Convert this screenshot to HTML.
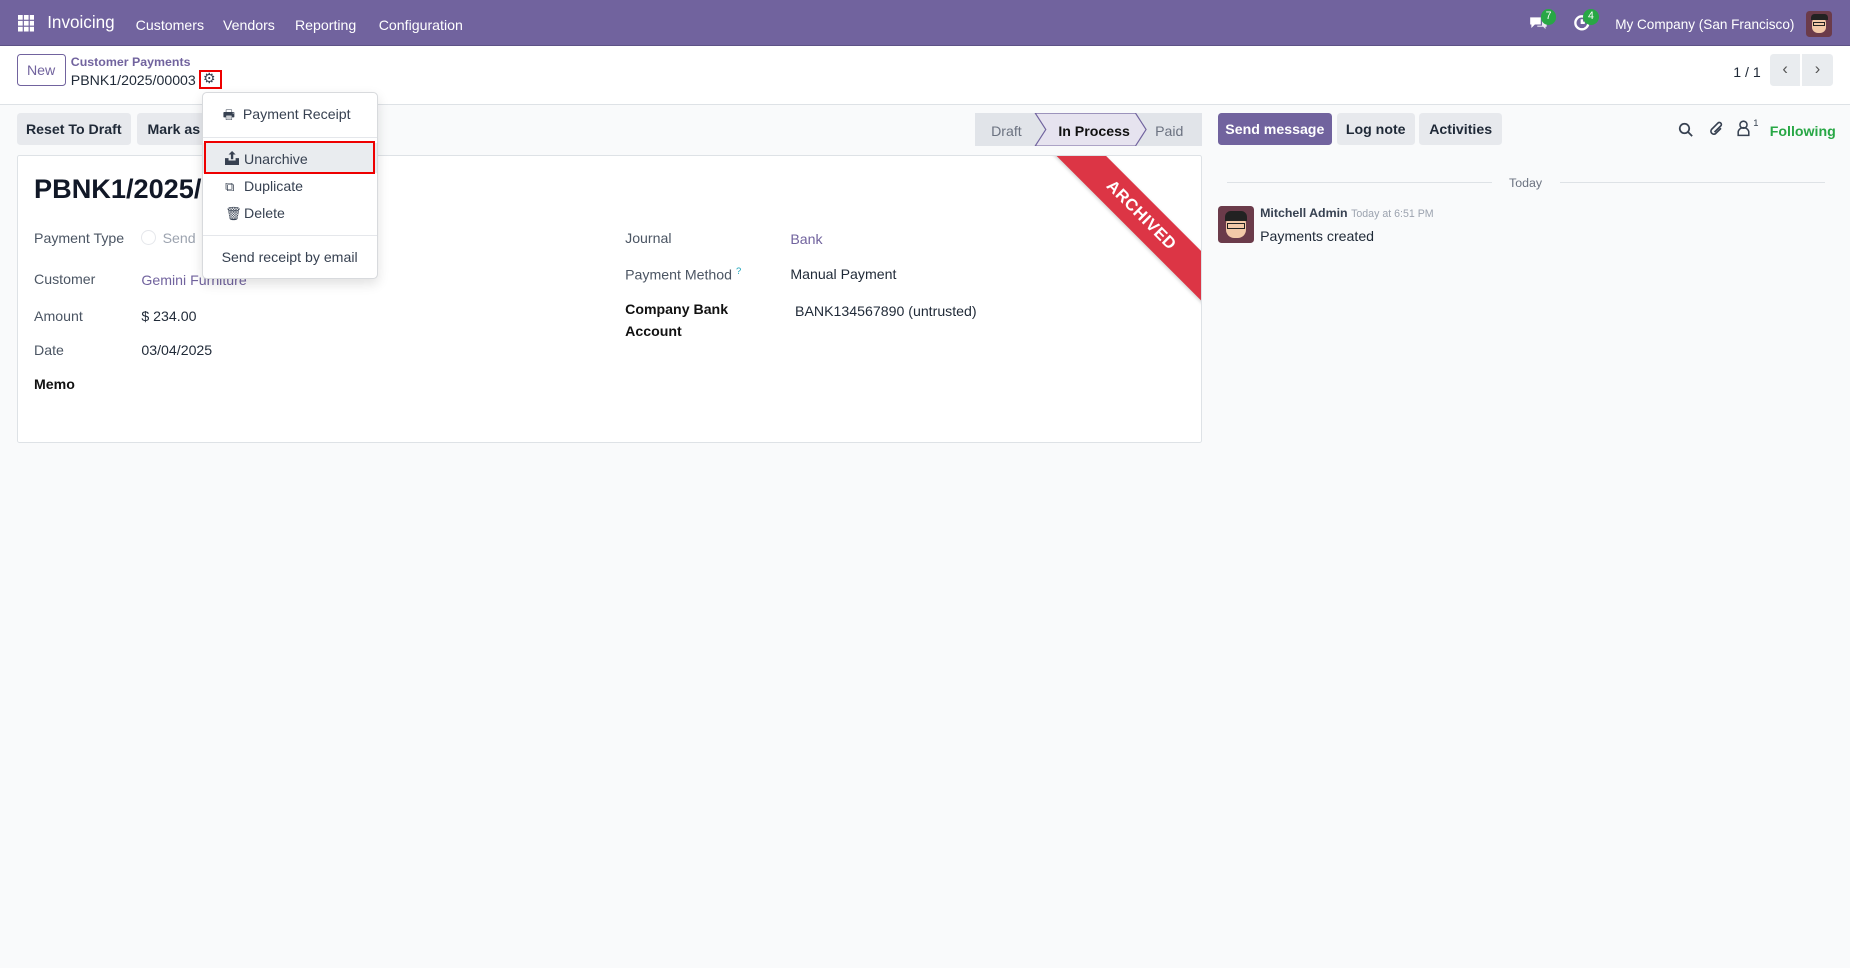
<!DOCTYPE html>
<html><head><meta charset="utf-8"><style>
html,body{margin:0;padding:0;}
body{width:1568px;height:820px;zoom:1.17985;background:#f9fafb;font-family:"Liberation Sans","DejaVu Sans",sans-serif;font-size:12px;color:#374151;position:relative;overflow:hidden;}
.a{position:absolute;white-space:nowrap;}
.nav{position:absolute;left:0;top:0;width:1568px;height:38px;background:#71639e;border-bottom:1px solid #5d5286;color:#fff;}
.cp{position:absolute;left:0;top:39px;width:1568px;height:49px;background:#fff;border-bottom:1px solid #dee2e6;}
.btn{position:absolute;height:27px;line-height:28px;border-radius:3px;background:#e7e9ed;color:#1f2937;font-weight:bold;font-size:12px;text-align:center;overflow:hidden;white-space:nowrap;}
.lbl{color:#4b5563;}
.sheet{position:absolute;left:14px;top:131px;width:1003px;height:243px;background:#fff;border:1px solid #dee2e6;border-radius:2px;overflow:hidden;}
.dd{position:absolute;left:171px;top:78px;width:148px;height:157px;background:#fff;border:1px solid #d8dadd;border-radius:4px;box-shadow:0 4px 10px rgba(0,0,0,.12);}
.dd .it{position:absolute;left:0;width:148px;height:23px;line-height:23px;color:#374151;font-size:12px;}
</style></head><body>

<div class="nav">
  <svg class="a" style="left:15px;top:13px" width="14" height="14" viewBox="0 0 14 14" fill="#fff"><rect x="0" y="0" width="4" height="4"/><rect x="5" y="0" width="4" height="4"/><rect x="10" y="0" width="4" height="4"/><rect x="0" y="5" width="4" height="4"/><rect x="5" y="5" width="4" height="4"/><rect x="10" y="5" width="4" height="4"/><rect x="0" y="10" width="4" height="4"/><rect x="5" y="10" width="4" height="4"/><rect x="10" y="10" width="4" height="4"/></svg>
  <div class="a" style="left:40px;top:11px;font-size:14.5px;">Invoicing</div>
  <div class="a" style="left:115px;top:14px;">Customers</div>
  <div class="a" style="left:189px;top:14px;">Vendors</div>
  <div class="a" style="left:250px;top:14px;">Reporting</div>
  <div class="a" style="left:321px;top:14px;">Configuration</div>
  <svg class="a" style="left:1296px;top:13px" width="16" height="14" viewBox="0 0 16 14" fill="#fff"><path d="M1 2h9v6H5l-3 3V8H1z"/><path d="M11 4h4v6h-1v2l-2-2H7V9h4z" opacity=".85"/></svg>
  <div class="a" style="left:1306px;top:8px;width:13px;height:13px;border-radius:7px;background:#28a745;font-size:9px;line-height:13px;text-align:center;">7</div>
  <svg class="a" style="left:1333px;top:12px" width="15" height="15" viewBox="0 0 15 15" fill="none" stroke="#fff" stroke-width="2"><circle cx="7.5" cy="7.5" r="5.5"/><path d="M7.5 4.5v3h2.5"/></svg>
  <div class="a" style="left:1342px;top:8px;width:13px;height:13px;border-radius:7px;background:#28a745;font-size:9px;line-height:13px;text-align:center;">4</div>
  <div class="a" style="left:1369px;top:14px;font-size:11.5px;">My Company (San Francisco)</div>
  <div class="a" style="left:1531px;top:9px;width:22px;height:22px;border-radius:3px;background:#6b3b4a;overflow:hidden;">
    <div style="position:absolute;left:5px;top:5px;width:12px;height:14px;border-radius:5px;background:#f3c9a8;"></div>
    <div style="position:absolute;left:4px;top:3px;width:14px;height:5px;border-radius:3px 3px 0 0;background:#222;"></div>
    <div style="position:absolute;left:6px;top:10px;width:10px;height:3px;border:1px solid #222;box-sizing:border-box;"></div>
  </div>
</div>

<div class="cp">
  <div class="a" style="left:14px;top:7px;width:40px;height:25px;border:1px solid #71639e;border-radius:3px;color:#71639e;line-height:27px;text-align:center;">New</div>
  <div class="a" style="left:60px;top:8px;font-size:10.5px;font-weight:bold;color:#71639e;">Customer Payments</div>
  <div class="a" style="left:60px;top:22px;font-size:12px;color:#1f2937;">PBNK1/2025/00003</div>
  <div class="a" style="left:169px;top:20px;width:16px;height:13px;border:2px solid #e00;"></div>
  <div class="a" style="left:172px;top:20px;font-size:12px;color:#374151;">⚙</div>
  <div class="a" style="left:1469px;top:15px;color:#1f2937;">1 / 1</div>
  <div class="a" style="left:1500px;top:7px;width:26px;height:27px;background:#e9ecef;border-radius:3px 0 0 3px;text-align:center;line-height:27px;color:#555;font-size:14px;">‹</div>
  <div class="a" style="left:1527px;top:7px;width:27px;height:27px;background:#e9ecef;border-radius:0 3px 3px 0;text-align:center;line-height:27px;color:#555;font-size:14px;">›</div>
</div>

<div class="btn" style="left:14px;top:96px;width:97px;">Reset To Draft</div>
<div class="btn" style="left:116px;top:96px;width:70px;text-align:left;padding-left:9px;box-sizing:border-box;">Mark as Sent</div>

<svg class="a" style="left:826px;top:96px" width="193" height="28" viewBox="0 0 193 28">
  <rect width="193" height="28" fill="#e1e4e9"/>
  <polygon points="51,0 136,0 145,14 136,28 51,28 60,14" fill="#e6e3ef" stroke="#71639e" stroke-width="1"/>
</svg>
<div class="a" style="left:840px;top:104px;color:#6b7280;">Draft</div>
<div class="a" style="left:897px;top:104px;color:#111;font-weight:bold;">In Process</div>
<div class="a" style="left:979px;top:104px;color:#6b7280;">Paid</div>

<div class="sheet">
  <div class="a" style="left:14px;top:15px;font-size:23px;font-weight:bold;color:#111827;">PBNK1/2025/00003</div>
  <div class="a lbl" style="left:14px;top:63px;">Payment Type</div>
  <div class="a" style="left:105px;top:63px;width:11px;height:11px;border-radius:50%;border:1px solid #e5e7eb;"></div>
  <div class="a" style="left:123px;top:63px;color:#9ca3af;">Send</div>
  <div class="a lbl" style="left:14px;top:98px;">Customer</div>
  <div class="a" style="left:105px;top:99px;color:#71639e;">Gemini Furniture</div>
  <div class="a lbl" style="left:14px;top:129px;">Amount</div>
  <div class="a" style="left:105px;top:129px;color:#1f2937;">$ 234.00</div>
  <div class="a lbl" style="left:14px;top:158px;">Date</div>
  <div class="a" style="left:105px;top:158px;color:#1f2937;">03/04/2025</div>
  <div class="a" style="left:14px;top:187px;font-weight:bold;color:#111;">Memo</div>

  <div class="a lbl" style="left:515px;top:63px;">Journal</div>
  <div class="a" style="left:655px;top:64px;color:#71639e;">Bank</div>
  <div class="a lbl" style="left:515px;top:93px;">Payment Method <sup style="color:#17a2b8;font-size:8px;">?</sup></div>
  <div class="a" style="left:655px;top:94px;color:#1f2937;">Manual Payment</div>
  <div class="a" style="left:515px;top:122px;font-weight:bold;color:#111;line-height:18px;">Company Bank<br>Account</div>
  <div class="a" style="left:659px;top:125px;color:#1f2937;">BANK134567890 (untrusted)</div>

  <div class="a" style="left:842px;top:36px;width:220px;height:30px;background:#dc3545;transform:rotate(45deg);transform-origin:center;box-shadow:0 1px 3px rgba(0,0,0,.2);color:#fff;font-weight:bold;font-size:14px;line-height:30px;text-align:center;letter-spacing:.5px;">ARCHIVED</div>
</div>

<div class="dd">
  <div class="it" style="top:7px;"><span style="position:absolute;left:17px;font-size:11px;">🖶</span><span style="position:absolute;left:34px;">Payment Receipt</span></div>
  <div class="a" style="left:0;top:37px;width:148px;height:1px;background:#e5e7eb;"></div>
  <div class="it" style="top:42px;height:26px;background:#e9ecef;"></div>
  <div class="a" style="left:1px;top:41px;width:142px;height:24px;border:2px solid #e00;"></div>
  <svg class="a" style="left:19px;top:49px" width="12" height="12" viewBox="0 0 12 12" fill="#374151"><path d="M6 0l3 3H7v4H5V3H3z"/><path d="M0 6h3v2h6V6h3v6H0z"/></svg>
  <div class="a" style="left:35px;top:49px;">Unarchive</div>
  <div class="it" style="top:68px;"><span style="position:absolute;left:19px;font-size:11px;">⧉</span><span style="position:absolute;left:35px;">Duplicate</span></div>
  <div class="it" style="top:91px;"><span style="position:absolute;left:19px;font-size:11px;">🗑</span><span style="position:absolute;left:35px;">Delete</span></div>
  <div class="a" style="left:0;top:120px;width:148px;height:1px;background:#e5e7eb;"></div>
  <div class="it" style="top:128px;"><span style="position:absolute;left:16px;">Send receipt by email</span></div>
</div>

<div class="btn" style="left:1032px;top:96px;width:97px;background:#71639e;color:#fff;">Send message</div>
<div class="btn" style="left:1133px;top:96px;width:66px;">Log note</div>
<div class="btn" style="left:1203px;top:96px;width:70px;">Activities</div>
<svg class="a" style="left:1422px;top:103px" width="13" height="13" viewBox="0 0 13 13" fill="none" stroke="#374151" stroke-width="1.5"><circle cx="5.5" cy="5.5" r="4"/><path d="M8.5 8.5l3.5 3.5"/></svg>
<svg class="a" style="left:1448px;top:102px" width="14" height="15" viewBox="0 0 14 15" fill="none" stroke="#374151" stroke-width="1.4"><path d="M11 7l-4.5 4.5a2.5 2.5 0 01-3.5-3.5l5.5-5.5a1.7 1.7 0 012.4 2.4L5.5 10.3"/></svg>
<svg class="a" style="left:1472px;top:102px" width="11" height="14" viewBox="0 0 11 14" fill="none" stroke="#374151" stroke-width="1.3"><circle cx="5.5" cy="4" r="3"/><path d="M1 13v-2.5a4.5 4 0 019 0V13z"/></svg>
<div class="a" style="left:1486px;top:99px;font-size:8px;color:#374151;">1</div>
<div class="a" style="left:1500px;top:104px;color:#28a745;font-weight:bold;">Following</div>

<div class="a" style="left:1040px;top:154px;width:225px;height:1px;background:#dee2e6;"></div>
<div class="a" style="left:1322px;top:154px;width:225px;height:1px;background:#dee2e6;"></div>
<div class="a" style="left:1279px;top:149px;font-size:10.5px;color:#6b7280;">Today</div>

<div class="a" style="left:1032px;top:175px;width:31px;height:31px;border-radius:3px;background:#6b3b4a;overflow:hidden;">
  <div style="position:absolute;left:7px;top:7px;width:17px;height:20px;border-radius:7px;background:#f3c9a8;"></div>
  <div style="position:absolute;left:6px;top:4px;width:19px;height:8px;border-radius:5px 5px 0 0;background:#222;"></div>
  <div style="position:absolute;left:8px;top:14px;width:15px;height:5px;border:1px solid #222;box-sizing:border-box;"></div>
</div>
<div class="a" style="left:1068px;top:175px;font-size:10.5px;font-weight:bold;color:#374151;">Mitchell Admin <span style="font-weight:normal;font-size:9px;color:#9ca3af;">Today at 6:51 PM</span></div>
<div class="a" style="left:1068px;top:193px;color:#1f2937;">Payments created</div>

</body></html>
